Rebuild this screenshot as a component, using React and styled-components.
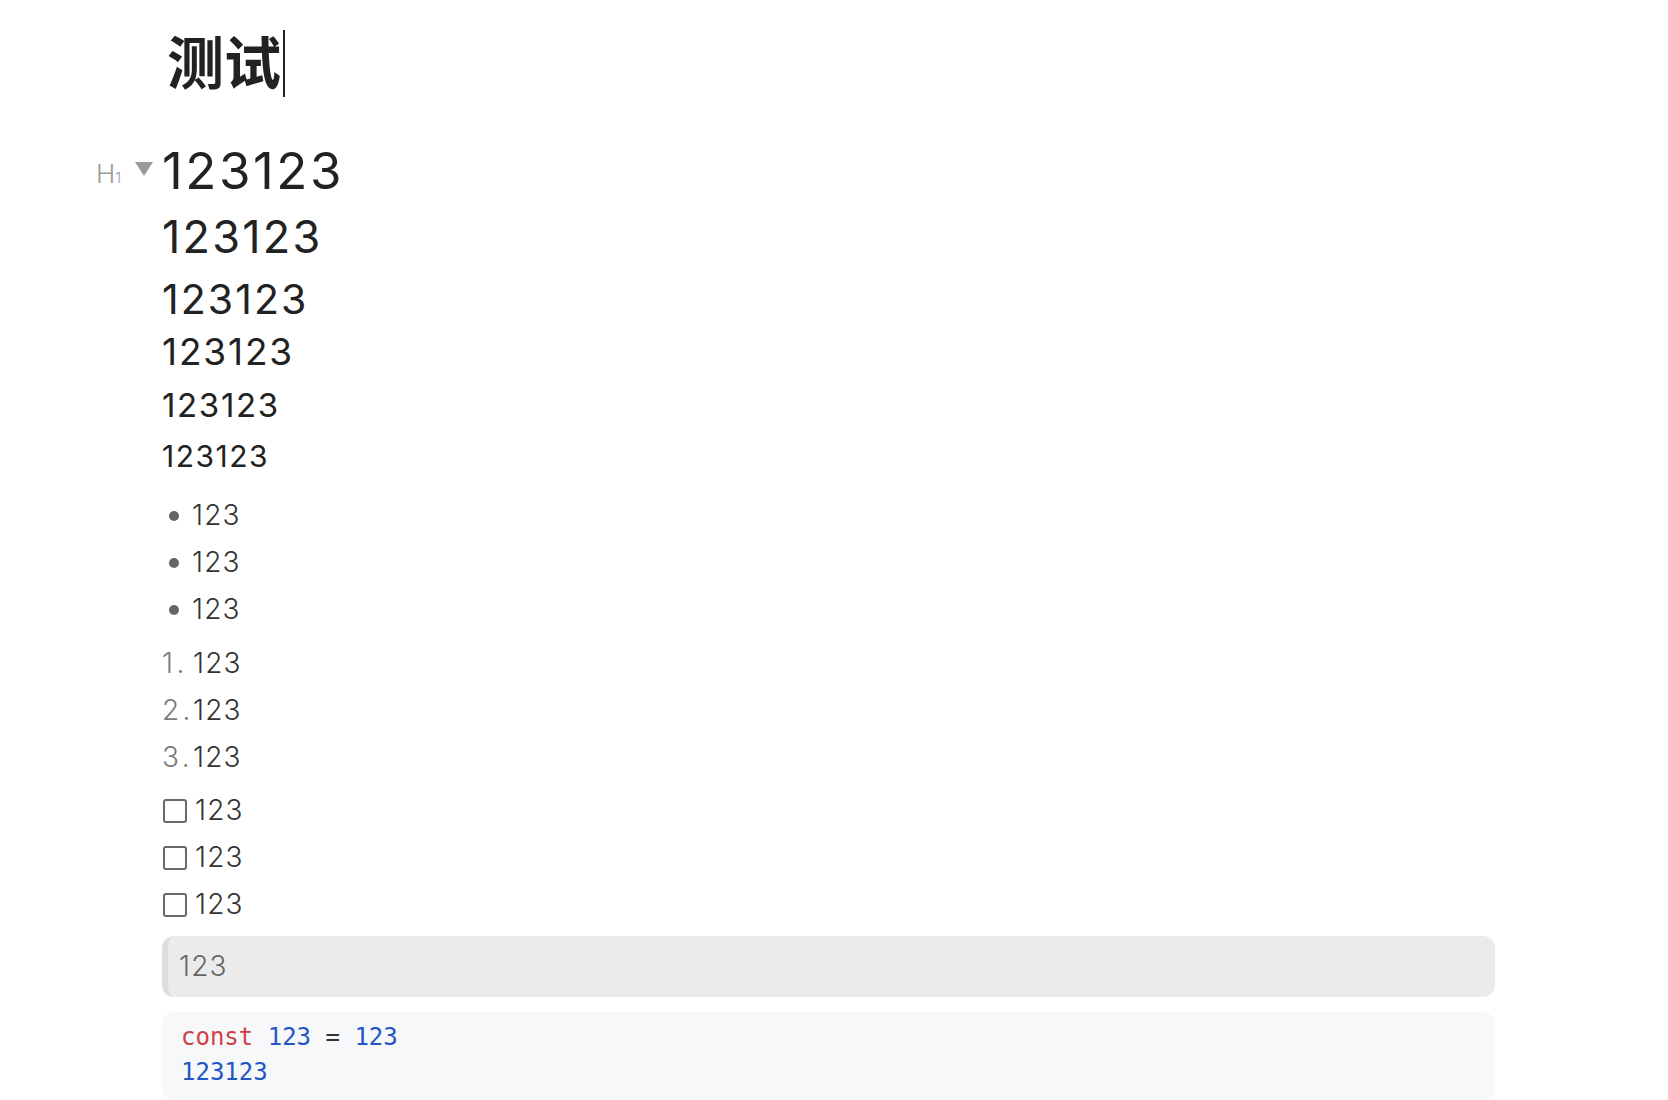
import styled, { createGlobalStyle } from 'styled-components';

const GlobalStyle = createGlobalStyle`
  body {
    margin: 0;
    background: #fff;
    color: #222;
    font-family: Inter, "Noto Sans CJK SC", sans-serif;
  }
`;

const Page = styled.div`
  padding: 0 173px 0 162px;
`;

const Title = styled.h1`
  display: flex;
  align-items: flex-start;
  margin: 0;
  padding: 24px 0 0 5px;
  font-family: "Noto Sans CJK SC", sans-serif;
  font-size: 57px;
  font-weight: 700;
  line-height: 70px;
  color: #222;
`;

const Caret = styled.span`
  width: 2px;
  height: 67px;
  margin: 6px 0 0 2px;
  background: #222;
`;

const headingSizes = {
  1: { size: 51, lh: 66, mt: 41 },
  2: { size: 45, lh: 62, mt: 2 },
  3: { size: 41, lh: 56, mt: 3 },
  4: { size: 37, lh: 50, mt: 0 },
  5: { size: 33, lh: 50, mt: 3 },
  6: { size: 30, lh: 46, mt: 3 },
};

const Heading = styled.div`
  position: relative;
  margin-top: ${(p) => headingSizes[p.$level].mt}px;
  font-size: ${(p) => headingSizes[p.$level].size}px;
  line-height: ${(p) => headingSizes[p.$level].lh}px;
  font-weight: 420;
  letter-spacing: 0.05em;
  color: #222;
`;

const Gutter = styled.div`
  position: absolute;
  left: -66px;
  top: 23px;
  display: flex;
  align-items: flex-start;
  gap: 14px;
  color: #9a9a9a;
  line-height: 1;
  letter-spacing: 0;
`;

const GutterLabel = styled.span`
  font-size: 26px;
  font-weight: 300;
  sub {
    font-size: 15px;
    vertical-align: baseline;
  }
`;

const Fold = styled.svg`
  margin-top: 1px;
`;

const List = styled.div`
  margin-top: ${(p) => p.$mt}px;
`;

const Item = styled.div`
  display: flex;
  align-items: center;
  height: 47px;
  font-size: 28px;
  line-height: 47px;
  font-weight: 330;
  letter-spacing: 0.04em;
  color: #333;
`;

const Dot = styled.span`
  width: 10px;
  height: 10px;
  margin: 0 13px 0 7px;
  border-radius: 50%;
  background: #636569;
`;

const Num = styled.span`
  width: 31px;
  color: #7a7a7a;
  font-weight: 300;
  letter-spacing: 0.12em;
`;

const Box = styled.span`
  box-sizing: border-box;
  width: 24px;
  height: 24px;
  margin: 0 8px 0 1px;
  border: 2.5px solid #66686b;
  border-radius: 3px;
`;

const Quote = styled.div`
  margin-top: 8px;
  height: 61px;
  padding-left: 11px;
  border-left: 6px solid #dedede;
  border-radius: 12px;
  background: #ebebeb;
  font-size: 28px;
  line-height: 61px;
  font-weight: 300;
  letter-spacing: 0.04em;
  color: #666;
`;

const Code = styled.pre`
  margin: 15px 0 0;
  padding: 8px 19px 10px;
  border-radius: 12px;
  background: #f6f8fa;
  font-family: "DejaVu Sans Mono", monospace;
  font-size: 24px;
  line-height: 35px;
  color: #333;
`;

const Kw = styled.span`
  color: #cf4048;
`;

const Lit = styled.span`
  color: #2256c5;
`;

export default function App() {
  return (
    <>
      <GlobalStyle />
      <Page>
        <Title>
          测试
          <Caret />
        </Title>
        <Heading $level={1}>
          <Gutter>
            <GutterLabel>
              H<sub>1</sub>
            </GutterLabel>
            <Fold width="18" height="14" viewBox="0 0 18 14">
              <path d="M0 0 H18 L9 14 Z" fill="#9a9a9a" />
            </Fold>
          </Gutter>
          123123
        </Heading>
        <Heading $level={2}>123123</Heading>
        <Heading $level={3}>123123</Heading>
        <Heading $level={4}>123123</Heading>
        <Heading $level={5}>123123</Heading>
        <Heading $level={6}>123123</Heading>

        <List $mt={13}>
          {[0, 1, 2].map((i) => (
            <Item key={i}>
              <Dot />
              123
            </Item>
          ))}
        </List>

        <List $mt={7}>
          {[1, 2, 3].map((n) => (
            <Item key={n}>
              <Num>{n}.</Num>
              123
            </Item>
          ))}
        </List>

        <List $mt={6}>
          {[0, 1, 2].map((i) => (
            <Item key={i}>
              <Box />
              123
            </Item>
          ))}
        </List>

        <Quote>123</Quote>

        <Code>
          <Kw>const</Kw> <Lit>123</Lit> = <Lit>123</Lit>
          {'\n'}
          <Lit>123123</Lit>
        </Code>
      </Page>
    </>
  );
}
